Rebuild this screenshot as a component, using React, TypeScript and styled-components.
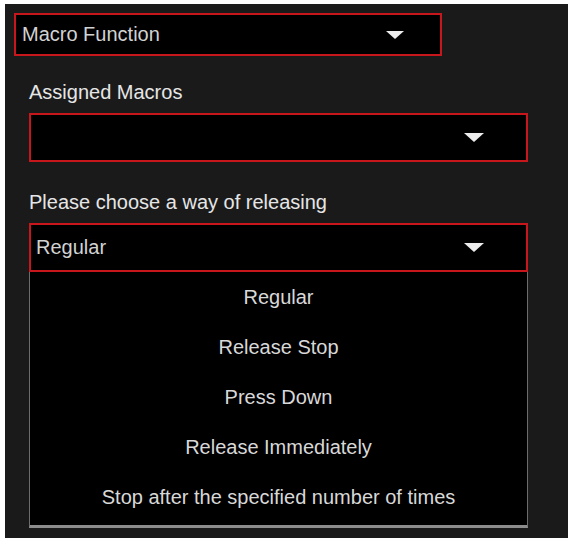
import React from 'react'
import styled, { createGlobalStyle } from 'styled-components'

const GlobalStyle = createGlobalStyle`
  html, body {
    margin: 0;
    padding: 0;
    background: #ffffff;
  }
  body {
    font-family: "Liberation Sans", Arial, sans-serif;
  }
`

const Panel = styled.div`
  margin: 4px 0 0 5px;
  height: 534px;
  background: #1a1a1a;
  padding: 9px 0 0 9px;
  box-sizing: border-box;
  display: flex;
  flex-direction: column;
`

const SelectBox = styled.div<{ $width: number; $height: number; $pad: number }>`
  position: relative;
  width: ${(p) => p.$width}px;
  height: ${(p) => p.$height}px;
  box-sizing: border-box;
  border: 2px solid #c8161d;
  background: #000;
  display: flex;
  align-items: center;
  justify-content: space-between;
  padding: 0 ${(p) => p.$pad}px 0 ${(p) => (p.$pad > 40 ? 5 : 6)}px;
  color: #d2d2d2;
  font-size: 20px;
`

const Caret = styled.span<{ $size: number }>`
  width: 0;
  height: 0;
  border-left: ${(p) => p.$size}px solid transparent;
  border-right: ${(p) => p.$size}px solid transparent;
  border-top: ${(p) => Math.round(p.$size * 0.9)}px solid #ececec;
`

const Section = styled.div`
  display: flex;
  flex-direction: column;
  padding-left: 15px;
  width: 499px;
`

const Label = styled.div<{ $top: number }>`
  margin-top: ${(p) => p.$top}px;
  margin-bottom: 9px;
  height: 23px;
  line-height: 23px;
  color: #e6e6e6;
  font-size: 20px;
`

const OptionList = styled.ul`
  list-style: none;
  margin: 0;
  padding: 0 0 3px;
  width: 499px;
  box-sizing: border-box;
  background: #000;
  border-left: 1px solid #6c6c6c;
  border-right: 1px solid #6c6c6c;
  border-bottom: 3px solid #8c8c8c;
`

const Option = styled.li`
  height: 50px;
  display: flex;
  align-items: center;
  justify-content: center;
  color: #d8d8d8;
  font-size: 20px;
`

const options = [
  'Regular',
  'Release Stop',
  'Press Down',
  'Release Immediately',
  'Stop after the specified number of times',
]

export default function App() {
  return (
    <>
      <GlobalStyle />
      <Panel>
        <SelectBox $width={428} $height={43} $pad={36}>
          <span>Macro Function</span>
          <Caret $size={9} />
        </SelectBox>
        <Section>
          <Label $top={25}>Assigned Macros</Label>
          <SelectBox $width={499} $height={49} $pad={42}>
            <span />
            <Caret $size={10} />
          </SelectBox>
          <Label $top={29}>Please choose a way of releasing</Label>
          <SelectBox $width={499} $height={49} $pad={42}>
            <span>Regular</span>
            <Caret $size={10} />
          </SelectBox>
          <OptionList>
            {options.map((o) => (
              <Option key={o}>{o}</Option>
            ))}
          </OptionList>
        </Section>
      </Panel>
    </>
  )
}
